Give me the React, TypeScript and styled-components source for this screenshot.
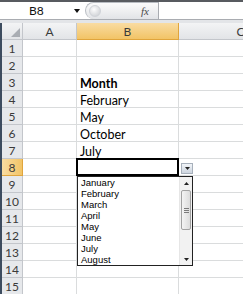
import React, {FC} from 'react';
import styled, {createGlobalStyle} from 'styled-components';

const GlobalStyle = createGlobalStyle`
  html, body {
    margin: 0;
    padding: 0;
    background: #fff;
  }
  body {
    width: 243px;
    height: 294px;
    overflow: hidden;
    font-family: Lato, 'Liberation Sans', sans-serif;
  }
`;

const Window = styled.div`
  display: flex;
  flex-direction: column;
  width: 243px;
  height: 294px;
  overflow: hidden;
  background: #fff;
`;

const FormulaBar = styled.div`
  display: flex;
  align-items: stretch;
  height: 17px;
  border-top: 2px solid #585b60;
  border-bottom: 1px solid #a9acb1;
  background: #fff;
`;

const NameBox = styled.div`
  position: relative;
  width: 83px;
  flex: none;
  display: flex;
  align-items: center;
  padding-left: 29px;
  box-sizing: border-box;
  font-size: 12px;
  color: #111;
`;

const NameArrow = styled.svg`
  position: absolute;
  right: 3px;
  top: 7px;
`;

const FxPill = styled.div`
  width: 73px;
  flex: none;
  margin-left: 2px;
  box-sizing: border-box;
  display: flex;
  align-items: center;
  justify-content: space-between;
  padding: 0 9px 0 3px;
  border: 1px solid #b8bcc2;
  border-right: none;
  border-bottom: none;
  border-radius: 9px 0 0 9px;
  background: linear-gradient(#fbfbfb, #e2e4e7);
`;

const PillKnob = styled.span`
  width: 10px;
  height: 10px;
  border-radius: 50%;
  background: radial-gradient(circle at 40% 35%, #fdfdfd, #c6c9ce);
  border: 1px solid #d0d3d8;
`;

const Fx = styled.span`
  font-family: 'Liberation Serif', serif;
  font-style: italic;
  font-size: 11px;
  color: #4a4a4a;
`;

const FormulaInput = styled.div`
  flex: 1;
  border-left: 1px solid #a9acb1;
  background: #fff;
`;

const Gap = styled.div`
  height: 3px;
  background: #e3e5e8;
`;

const Sheet = styled.div`
  position: relative;
  flex: 1;
  display: grid;
  grid-template-columns: 21px 54px 102px 124px;
  grid-auto-rows: 17px;
  border-left: 2px solid #3d4c5f;
  overflow: hidden;
`;

const HeaderCell = styled.div<{$active?: boolean}>`
  box-sizing: border-box;
  display: flex;
  align-items: center;
  justify-content: center;
  font-size: 12px;
  color: #3a3a3a;
  border-right: 1px solid ${(p) => (p.$active ? '#e0a53c' : '#c3c6cb')};
  border-bottom: 1px solid ${(p) => (p.$active ? '#e0a53c' : '#c3c6cb')};
  background: ${(p) =>
    p.$active
      ? 'linear-gradient(#f9dca2, #f2c466)'
      : 'linear-gradient(#f3f4f5, #e2e4e7)'};
`;

const Corner = styled(HeaderCell)`
  position: relative;
`;

const CornerTriangle = styled.svg`
  position: absolute;
  right: 2px;
  bottom: 2px;
`;

const RowHeader = styled(HeaderCell)`
  padding-top: 1px;
  background: ${(p) =>
    p.$active ? 'linear-gradient(90deg, #f9dca2, #f2c466)' : '#e6e8eb'};
`;

const Cell = styled.div<{$bold?: boolean}>`
  box-sizing: border-box;
  display: flex;
  align-items: center;
  padding: 2px 0 0 3px;
  font-size: 12.5px;
  font-weight: ${(p) => (p.$bold ? 700 : 400)};
  color: #000;
  white-space: nowrap;
  border-right: 1px solid #dadcdd;
  border-bottom: 1px solid #dadcdd;
`;

const Selection = styled.div`
  position: absolute;
  left: 74px;
  top: 135px;
  width: 103px;
  height: 18px;
  box-sizing: border-box;
  border: 2px solid #000;
`;

const DropButton = styled.div`
  position: absolute;
  left: 179px;
  top: 140px;
  width: 12px;
  height: 11px;
  box-sizing: border-box;
  display: flex;
  align-items: center;
  justify-content: center;
  border: 1px solid #a7b0bb;
  background: linear-gradient(#f1f4f8, #cdd5df);
`;

const ListBox = styled.div`
  position: absolute;
  left: 75px;
  top: 153px;
  width: 116px;
  height: 90px;
  box-sizing: border-box;
  display: flex;
  border: 1px solid #222;
  background: #fff;
`;

const Items = styled.ul`
  flex: 1;
  margin: 0;
  padding: 0 0 0 3px;
  list-style: none;
  overflow: hidden;
`;

const Item = styled.li`
  height: 11px;
  line-height: 11px;
  font-family: 'Liberation Sans', sans-serif;
  font-size: 9.5px;
  color: #000;
`;

const Scrollbar = styled.div`
  width: 12px;
  display: flex;
  flex-direction: column;
  background: #f2f2f2;
  border-left: 1px solid #e6e6e6;
`;

const ScrollArrow = styled.div`
  height: 12px;
  display: flex;
  align-items: center;
  justify-content: center;
`;

const Track = styled.div`
  flex: 1;
  padding-top: 1px;
`;

const Thumb = styled.div`
  margin: 0 1px;
  height: 40px;
  box-sizing: border-box;
  display: flex;
  flex-direction: column;
  align-items: center;
  justify-content: center;
  gap: 1px;
  border: 1px solid #a2a2a2;
  border-radius: 2px;
  background: linear-gradient(90deg, #f4f4f4, #dcdcdc);
`;

const Grip = styled.span`
  width: 5px;
  height: 1px;
  background: #7a7a7a;
`;

const Triangle: FC<{up?: boolean}> = ({up}) => (
  <svg width="5" height="3" viewBox="0 0 5 3">
    <polygon points={up ? '0,3 5,3 2.5,0' : '0,0 5,0 2.5,3'} fill="#222" />
  </svg>
);

const columns = ['A', 'B', 'C'];
const values: Record<number, string> = {
  3: 'Month',
  4: 'February',
  5: 'May',
  6: 'October',
  7: 'July',
};
const months = [
  'January',
  'February',
  'March',
  'April',
  'May',
  'June',
  'July',
  'August',
];
const rows = Array.from({length: 15}, (_, i) => i + 1);

const App: FC = () => {
  return (
    <Window>
      <GlobalStyle />
      <FormulaBar>
        <NameBox>
          B8
          <NameArrow width="6" height="4" viewBox="0 0 6 4">
            <polygon points="0,0 6,0 3,4" fill="#111" />
          </NameArrow>
        </NameBox>
        <FxPill>
          <PillKnob />
          <Fx>fx</Fx>
        </FxPill>
        <FormulaInput />
      </FormulaBar>
      <Gap />
      <Sheet>
        <Corner>
          <CornerTriangle width="9" height="9" viewBox="0 0 9 9">
            <polygon points="9,0 9,9 0,9" fill="#a9adb3" />
          </CornerTriangle>
        </Corner>
        {columns.map((c) => (
          <HeaderCell key={c} $active={c === 'B'}>
            {c}
          </HeaderCell>
        ))}
        {rows.map((r) => (
          <React.Fragment key={r}>
            <RowHeader $active={r === 8}>{r}</RowHeader>
            <Cell />
            <Cell $bold={r === 3}>{values[r]}</Cell>
            <Cell />
          </React.Fragment>
        ))}
        <Selection />
        <DropButton>
          <Triangle />
        </DropButton>
        <ListBox>
          <Items>
            {months.map((m) => (
              <Item key={m}>{m}</Item>
            ))}
          </Items>
          <Scrollbar>
            <ScrollArrow>
              <Triangle up />
            </ScrollArrow>
            <Track>
              <Thumb>
                <Grip />
                <Grip />
                <Grip />
              </Thumb>
            </Track>
            <ScrollArrow>
              <Triangle />
            </ScrollArrow>
          </Scrollbar>
        </ListBox>
      </Sheet>
    </Window>
  );
};

export default App;
